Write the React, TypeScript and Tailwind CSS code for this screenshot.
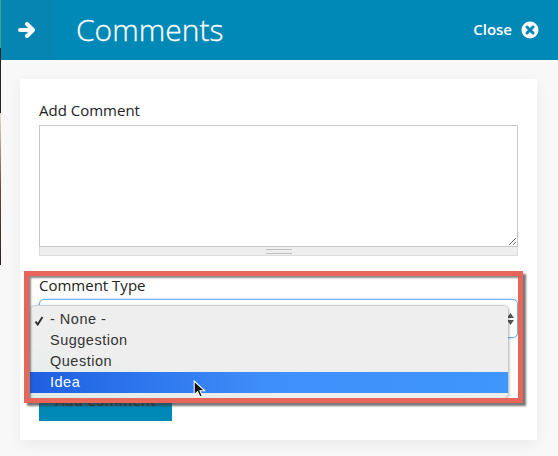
const Field = ({ label }: { label: string }) => <label className="block text-[15px] leading-[20px] text-[#222]">{label}</label>;

const options = ["- None -", "Suggestion", "Question"];

const App = () => {
	return (
		<div className="relative h-[456px] w-[558px] overflow-hidden bg-[#f8f8f8] font-['Open_Sans',sans-serif]">
			<header className="flex h-[60px] items-center bg-[#0089b7] text-white">
				<div className="flex h-full w-[54px] items-center justify-center bg-[#0785b2]">
					<svg width="20" height="18" viewBox="0 0 20 18" fill="none" stroke="white" strokeWidth="4" strokeLinecap="round" strokeLinejoin="round">
						<path d="M3 9h13M10 3l6 6-6 6" />
					</svg>
				</div>
				<h1 className="ml-[22px] text-[30px] font-light leading-none [-webkit-text-stroke:0.3px_white]">Comments</h1>
				<div className="ml-auto mr-[19px] flex items-center gap-[9px] text-[15px] font-semibold">
					<span className="mb-[2px]">Close</span>
					<svg width="18" height="18" viewBox="0 0 18 18">
						<circle cx="9" cy="9" r="8.5" fill="white" />
						<path d="M6 6l6 6M12 6l-6 6" stroke="#0089b7" strokeWidth="3" strokeLinecap="round" />
					</svg>
				</div>
			</header>

			<main className="mx-[20px] mt-[19px] h-[361px] w-[517px] bg-white px-[19px] pt-[21px] shadow-[0_4px_14px_rgba(0,0,0,0.06)]">
				<Field label="Add Comment" />
				<textarea className="mt-[5px] block h-[122px] w-full border border-[#c8c8c8] bg-white" />
				<div className="flex h-[9px] items-center justify-center border border-t-0 border-[#dcdcdc] bg-[#eeeeee]">
					<div className="h-[5px] w-[26px] border-y border-[#c0c0c0]" />
				</div>
				<div className="mt-[19px]">
					<Field label="Comment Type" />
				</div>
				<div className="mt-[4px] flex h-[39px] flex-col items-end justify-center gap-[2px] rounded-[5px] border border-[#6db1ee] bg-white pr-[3px] shadow-[0_0_3px_rgba(109,177,238,0.6)]">
					<svg width="7" height="5" viewBox="0 0 7 5"><path d="M3.5 0L7 5H0z" fill="#555" /></svg>
					<svg width="7" height="5" viewBox="0 0 7 5"><path d="M3.5 5L7 0H0z" fill="#555" /></svg>
				</div>
				<button className="mt-[62px] flex h-[21px] w-[133px] items-start justify-center bg-[#0089b7] text-[14.5px] font-semibold leading-[2px] text-[#333]">Add Comment</button>
			</main>

			{/* red highlight and the open menu sit over the form */}
			<div className="absolute left-[30px] top-[305px] h-[93px] w-[478px] rounded-[5px] border-t border-[#cfcfcf] bg-gradient-to-tr from-[#dcedea] via-[#eeeeee] via-30% to-[#eeeeee] pt-[3px] font-['Liberation_Sans',sans-serif] text-[14.5px] leading-[21px] tracking-[0.5px] text-[#333] shadow-[1px_1px_3px_rgba(0,0,0,0.35)]">
				{options.map((o, i) => (
					<div key={o} className="relative pl-[20px]">
						{i === 0 && (
							<svg className="absolute left-[4px] top-[7px]" width="10" height="10" viewBox="0 0 10 10" fill="none" stroke="#333" strokeWidth="2">
								<path d="M1.5 5.5l2.2 3L8.5 1" />
							</svg>
						)}
						{o}
					</div>
				))}
				<div className="h-[21px] bg-gradient-to-r from-[#1f5fe0] via-[#3f8ffa] via-50% to-[#3f96fb] pl-[20px] text-white">Idea</div>
			</div>
			<div className="absolute left-[24px] top-[271px] h-[132px] w-[499px] border-[5px] border-[#e8655a] shadow-[3px_3px_2px_rgba(60,60,60,0.7),inset_2px_2px_2px_rgba(60,60,60,0.6)]" />
			<svg className="absolute left-[193px] top-[380px]" width="14" height="19" viewBox="0 0 13 18">
				<path d="M1 1v13l3.2-3 2.2 5 2.2-1-2.2-4.8H11z" fill="#111" stroke="white" strokeWidth="1" />
			</svg>
			<div className="absolute left-0 top-0 h-[48px] w-[1px] bg-[#3aa878]" />
			<div className="absolute left-0 top-[48px] h-[65px] w-[1px] bg-[#222]" />
			<div className="absolute left-0 top-[113px] h-[152px] w-[1px] bg-gradient-to-b from-[#e8dfd0] via-[#6b4a3c] to-[#2a2024]" />
		</div>
	);
};

export default App;
